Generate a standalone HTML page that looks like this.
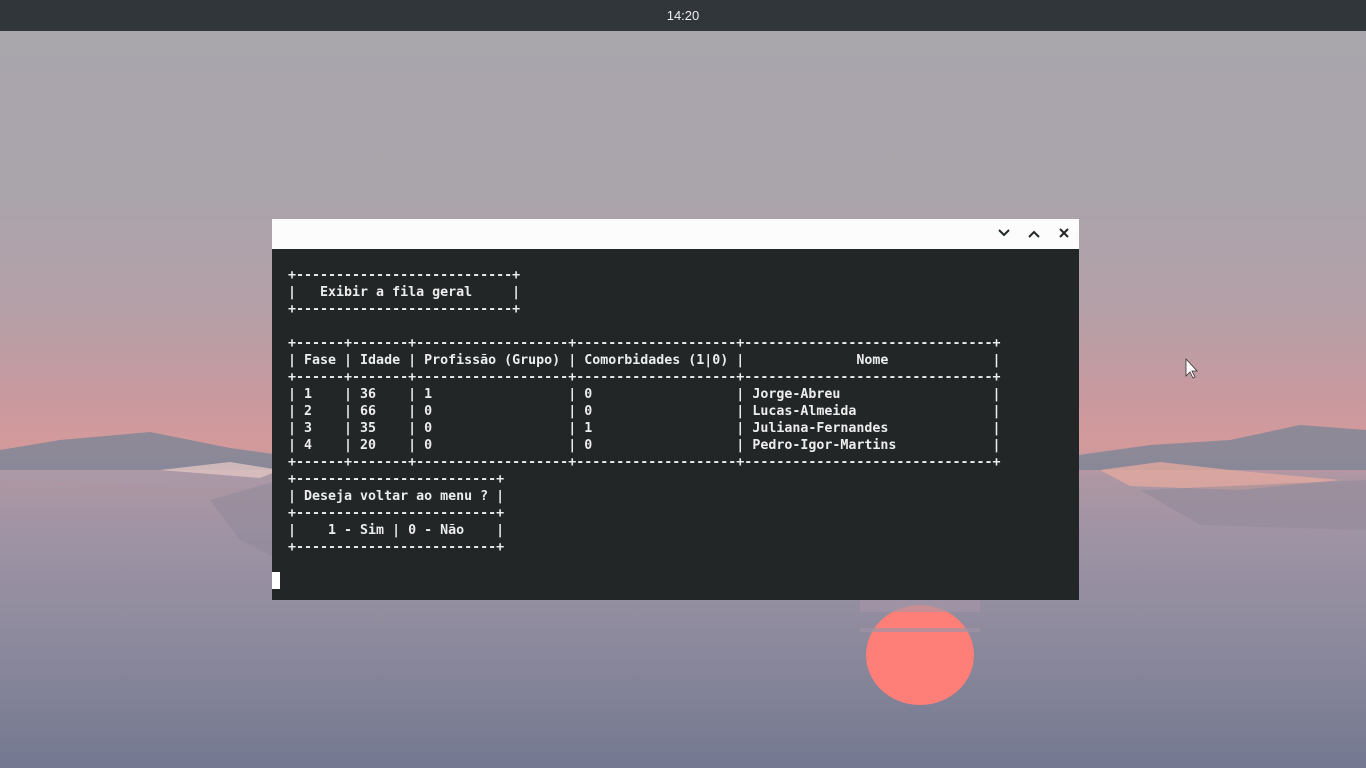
<!DOCTYPE html>
<html><head><meta charset="utf-8"><style>
html,body{margin:0;padding:0;width:1366px;height:768px;overflow:hidden}
body{position:relative;background:linear-gradient(180deg,#a9a6ad 0%,#aaa4ab 25%,#b5a0a8 40%,#c9999f 52%,#d49a9b 58%,#ae97a3 62%,#9e93a4 70%,#8f8b9e 82%,#737890 100%);font-family:"Liberation Sans",sans-serif}
#top{position:absolute;left:0;top:0;width:1366px;height:31px;background:#31363b;color:#eff0f1;font-size:13px;text-align:center;line-height:31px}
#win{position:absolute;left:272px;top:219px;width:807px;height:381px;background:#232627}
#tb{height:30px;background:#fcfcfc;position:relative}
pre{position:absolute;left:16px;top:48px;margin:0;font-family:"DejaVu Sans Mono","Liberation Mono",monospace;font-size:13.3px;line-height:17px;color:#eceded;font-weight:bold;letter-spacing:0}
#cur{position:absolute;left:0;top:353px;width:8px;height:17px;background:#fff}
</style></head><body>
<svg width="1366" height="768" style="position:absolute;left:0;top:0">
<polygon points="0,450 60,440 150,432 230,448 280,455 280,470 0,470" fill="#7d8596" opacity=".8"/>
<polygon points="0,470 280,470 280,490 120,484 0,480" fill="#a89aa8" opacity=".6"/>
<polygon points="160,470 230,462 280,470 260,478" fill="#e0c4c2" opacity=".8"/>
<polygon points="210,500 280,480 280,560 240,540" fill="#8e8898" opacity=".5"/>
<polygon points="1079,455 1150,445 1230,440 1300,425 1366,430 1366,470 1079,470" fill="#7d8596" opacity=".8"/>
<polygon points="1100,470 1160,462 1230,470 1340,480 1240,490 1130,486" fill="#e2a99f" opacity=".8"/>
<polygon points="1140,490 1366,480 1366,530 1200,525" fill="#8e8898" opacity=".5"/>
<ellipse cx="920" cy="655" rx="54" ry="50" fill="#fe7f78"/>
<rect x="860" y="600" width="120" height="12" fill="#a596a6" opacity=".6"/>
<rect x="860" y="628" width="120" height="4" fill="#9f93a4" opacity=".7"/>
<path d="M1186,359 l0,17 l4,-4 l3,6 l2,-1 l-3,-6 l5,0 z" fill="#fff" stroke="#333" stroke-width=".8"/>
</svg>
<div id="top">14:20</div>
<div id="win">
<div id="tb">
<svg width="807" height="30" style="position:absolute;left:0;top:0" fill="none" stroke="#232627" stroke-width="2">
<path d="M727,11 l5,5 l5,-5"/>
<path d="M757,18 l5,-5 l5,5"/>
<path d="M788,10 l8,8 M796,10 l-8,8"/>
</svg>
</div>
<pre>+---------------------------+
|   Exibir a fila geral     |
+---------------------------+

+------+-------+-------------------+--------------------+-------------------------------+
| Fase | Idade | Profissão (Grupo) | Comorbidades (1|0) |              Nome             |
+------+-------+-------------------+--------------------+-------------------------------+
| 1    | 36    | 1                 | 0                  | Jorge-Abreu                   |
| 2    | 66    | 0                 | 0                  | Lucas-Almeida                 |
| 3    | 35    | 0                 | 1                  | Juliana-Fernandes             |
| 4    | 20    | 0                 | 0                  | Pedro-Igor-Martins            |
+------+-------+-------------------+--------------------+-------------------------------+
+-------------------------+
| Deseja voltar ao menu ? |
+-------------------------+
|    1 - Sim | 0 - Não    |
+-------------------------+</pre>
<div id="cur"></div>
</div>
</body></html>
